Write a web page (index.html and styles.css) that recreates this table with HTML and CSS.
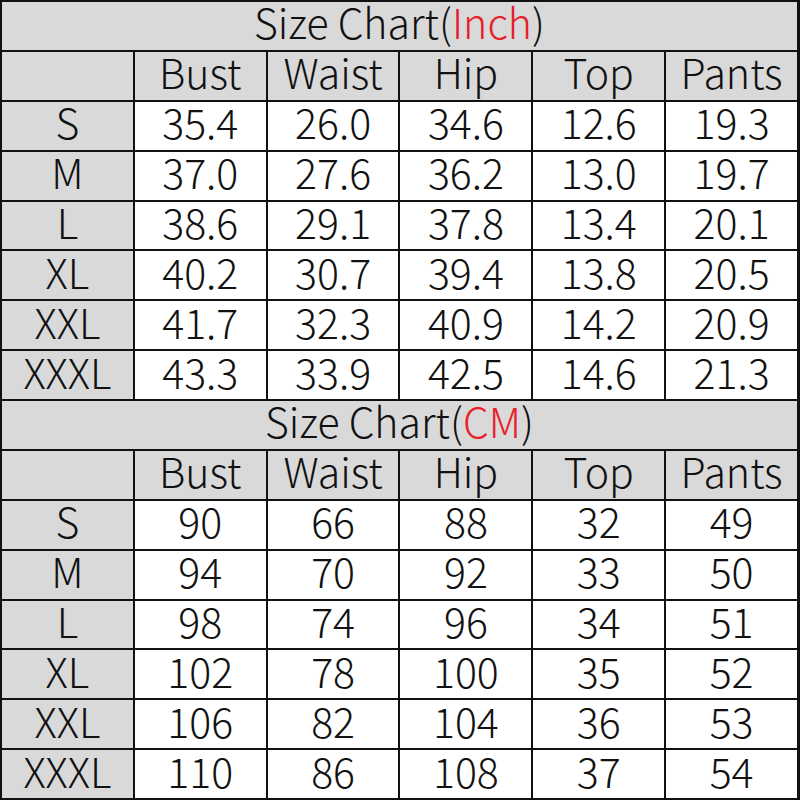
FILE: index.html
```html
<!DOCTYPE html>
<html>
<head>
<meta charset="utf-8">
<link rel="stylesheet" href="styles.css">
</head>
<body>
<div class="chart">
  <div class="cell title">Size Chart(<span class="unit">Inch</span>)</div>
  <div class="cell head"></div><div class="cell head">Bust</div><div class="cell head">Waist</div><div class="cell head">Hip</div><div class="cell head">Top</div><div class="cell head">Pants</div>
  <div class="cell size">S</div><div class="cell">35.4</div><div class="cell">26.0</div><div class="cell">34.6</div><div class="cell">12.6</div><div class="cell">19.3</div>
  <div class="cell size">M</div><div class="cell">37.0</div><div class="cell">27.6</div><div class="cell">36.2</div><div class="cell">13.0</div><div class="cell">19.7</div>
  <div class="cell size">L</div><div class="cell">38.6</div><div class="cell">29.1</div><div class="cell">37.8</div><div class="cell">13.4</div><div class="cell">20.1</div>
  <div class="cell size">XL</div><div class="cell">40.2</div><div class="cell">30.7</div><div class="cell">39.4</div><div class="cell">13.8</div><div class="cell">20.5</div>
  <div class="cell size">XXL</div><div class="cell">41.7</div><div class="cell">32.3</div><div class="cell">40.9</div><div class="cell">14.2</div><div class="cell">20.9</div>
  <div class="cell size">XXXL</div><div class="cell">43.3</div><div class="cell">33.9</div><div class="cell">42.5</div><div class="cell">14.6</div><div class="cell">21.3</div>

  <div class="cell title">Size Chart(<span class="unit">CM</span>)</div>
  <div class="cell head"></div><div class="cell head">Bust</div><div class="cell head">Waist</div><div class="cell head">Hip</div><div class="cell head">Top</div><div class="cell head">Pants</div>
  <div class="cell size">S</div><div class="cell">90</div><div class="cell">66</div><div class="cell">88</div><div class="cell">32</div><div class="cell">49</div>
  <div class="cell size">M</div><div class="cell">94</div><div class="cell">70</div><div class="cell">92</div><div class="cell">33</div><div class="cell">50</div>
  <div class="cell size">L</div><div class="cell">98</div><div class="cell">74</div><div class="cell">96</div><div class="cell">34</div><div class="cell">51</div>
  <div class="cell size">XL</div><div class="cell">102</div><div class="cell">78</div><div class="cell">100</div><div class="cell">35</div><div class="cell">52</div>
  <div class="cell size">XXL</div><div class="cell">106</div><div class="cell">82</div><div class="cell">104</div><div class="cell">36</div><div class="cell">53</div>
  <div class="cell size">XXXL</div><div class="cell">110</div><div class="cell">86</div><div class="cell">108</div><div class="cell">37</div><div class="cell">54</div>
</div>
</body>
</html>
```

FILE: styles.css
```css
html, body {
  margin: 0;
  padding: 0;
  background: #ffffff;
}
.chart {
  width: 800px;
  height: 800px;
  box-sizing: border-box;
  padding: 2px 3px 2px 2px;
  gap: 2px;
  background: #111111;
  display: grid;
  grid-template-columns: repeat(6, 1fr);
  grid-template-rows: repeat(16, 1fr);
  font-family: "Noto Sans CJK SC Light", "Noto Sans CJK SC DemiLight", "Noto Sans CJK SC", "Noto Sans", sans-serif;
  font-weight: 300;
  font-size: 41px;
  color: #111111;
}
.cell {
  background: #ffffff;
  display: flex;
  align-items: center;
  justify-content: center;
  box-sizing: border-box;
  padding-bottom: 8px;
  line-height: 1.1;
  white-space: nowrap;
  min-height: 0;
}
.title {
  grid-column: 1 / -1;
  background: #d9d9d9;
}
.head, .size {
  background: #d9d9d9;
}
.unit {
  color: #e8202a;
}
```
